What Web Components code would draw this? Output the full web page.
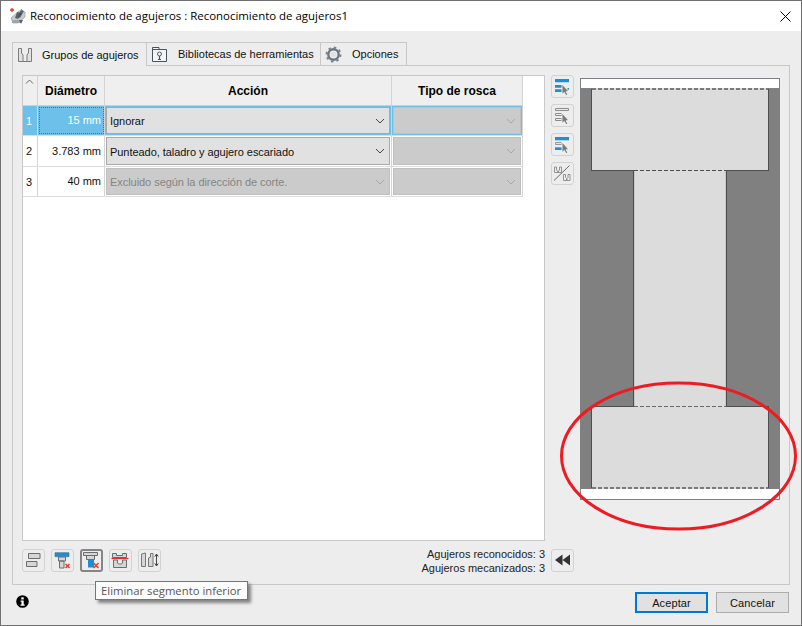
<!DOCTYPE html>
<html><head><meta charset="utf-8">
<style>
html,body{margin:0;padding:0;background:#ededed}
body{width:802px;height:626px;overflow:hidden;font-family:"Liberation Sans",Arial,sans-serif;font-size:11px;color:#111}
</style></head><body>
<hole-dialog>
  <hole-titlebar slot="title">Reconocimiento de agujeros : Reconocimiento de agujeros1</hole-titlebar>
  <hole-tabs slot="tabs">
    <hole-tab active icon="groups" style="width:135px">Grupos de agujeros</hole-tab>
    <hole-tab icon="lib" style="width:175px">Bibliotecas de herramientas</hole-tab>
    <hole-tab icon="gear" style="width:87px">Opciones</hole-tab>
  </hole-tabs>
  <hole-grid slot="grid">
    <hole-row head>
      <hole-cell kind="rowhead" head><svg width="9" height="5" viewBox="0 0 9 5"><path d="M1 4.500 4.500 1 8 4.500" fill="none" stroke="#666" stroke-width="1"/></svg></hole-cell>
      <hole-cell head>Diámetro</hole-cell>
      <hole-cell head>Acción</hole-cell>
      <hole-cell head>Tipo de rosca</hole-cell>
    </hole-row>
    <hole-row selected>
      <hole-cell kind="rowhead" selected>1</hole-cell>
      <hole-cell kind="num" selected focused>15 mm</hole-cell>
      <hole-cell kind="ctl" blue><hole-select>Ignorar</hole-select></hole-cell>
      <hole-cell kind="ctl" blue><hole-select disabled></hole-select></hole-cell>
    </hole-row>
    <hole-row tall>
      <hole-cell kind="rowhead">2</hole-cell>
      <hole-cell kind="num">3.783 mm</hole-cell>
      <hole-cell kind="ctl"><hole-select>Punteado, taladro y agujero escariado</hole-select></hole-cell>
      <hole-cell kind="ctl"><hole-select disabled></hole-select></hole-cell>
    </hole-row>
    <hole-row>
      <hole-cell kind="rowhead">3</hole-cell>
      <hole-cell kind="num">40 mm</hole-cell>
      <hole-cell kind="ctl"><hole-select disabled>Excluido según la dirección de corte.</hole-select></hole-cell>
      <hole-cell kind="ctl"><hole-select disabled></hole-select></hole-cell>
    </hole-row>
  </hole-grid>
  <hole-btn slot="side" icon="s1"></hole-btn>
  <hole-btn slot="side" icon="s2"></hole-btn>
  <hole-btn slot="side" icon="s3"></hole-btn>
  <hole-btn slot="side" icon="s4"></hole-btn>
  <hole-preview slot="preview"></hole-preview>
  <hole-btn slot="tools" icon="b1"></hole-btn>
  <hole-btn slot="tools" icon="b2"></hole-btn>
  <hole-btn slot="tools" icon="b3" active></hole-btn>
  <hole-btn slot="tools" icon="b4"></hole-btn>
  <hole-btn slot="tools" icon="b5"></hole-btn>
  <span slot="status">Agujeros reconocidos: 3</span>
  <span slot="status">Agujeros mecanizados: 3</span>
  <hole-btn slot="collapse" icon="rew"></hole-btn>
  <hole-push slot="ok" primary>Aceptar</hole-push>
  <hole-push slot="cancel">Cancelar</hole-push>
  <hole-tooltip slot="tip">Eliminar segmento inferior</hole-tooltip>
</hole-dialog>
<script>
const def=(name,css,html)=>{
  customElements.define(name,class extends HTMLElement{
    constructor(){super();const r=this.attachShadow({mode:'open'});r.innerHTML='<style>'+css+'</style>'+(typeof html==='function'?html(this):html);}
  });
};
const CUR='<path d="M11 9v10.500l2.300-2 1.700 3.200 1.800-1-1.600-3h2.800z" fill="#7a7a7a" stroke="#fff" stroke-width=".8"/>';
const ICONS={
 groups:'<svg width="16" height="16" viewBox="0 0 16 16" fill="none"><path d="M1.500 1.500h3v4.500L6 8v6.500H1.500zM14.500 1.500h-3v4.500L10 8v6.500h4.500z" fill="#e2e2e2" stroke="#7c7c7c"/><path d="M6 14.500h4" stroke="#7c7c7c"/></svg>',
 lib:'<svg width="17" height="16" viewBox="0 0 17 16" fill="none"><path d="M1.500 1.500h6.500v2h7.500v12h-14z" fill="#f3f6f8" stroke="#48535c"/><path d="M1.500 3.500h6.500" stroke="#48535c"/><circle cx="8.500" cy="8" r="2" stroke="#555"/><path d="M8.500 10v3.500M7 13.500h3" stroke="#555" stroke-width="1.200"/></svg>',
 gear:'<svg width="17" height="17" viewBox="0 0 17 17"><circle cx="8.500" cy="8.500" r="5.200" fill="none" stroke="#6b7680" stroke-width="2.400"/><circle cx="8.500" cy="8.500" r="7" fill="none" stroke="#7a858e" stroke-width="2" stroke-dasharray="2.500 3"/><circle cx="8.500" cy="8.500" r="2.800" fill="#e2e2e2"/></svg>',
 s1:'<svg width="23" height="23" viewBox="0 0 23 23"><path d="M4 4h14v3.300H4zM4 10h8v2.700H4zM4 14.300h8V17H4z" fill="#1d8fd6"/>'+CUR+'<path d="M16.500 13h1.500v1.800h-1.500z" fill="#1d8fd6"/></svg>',
 s2:'<svg width="23" height="23" viewBox="0 0 23 23" fill="none" stroke="#8c8c8c"><path d="M4.500 4.500h13v2h-13zM4.500 9.500h6.500v2H4.500zM4.500 14.500h6.500v2H4.500z"/>'+CUR+'</svg>',
 s3:'<svg width="23" height="23" viewBox="0 0 23 23"><path d="M4 4h14v3.300H4z" fill="#1d8fd6"/><path d="M4.500 9.500H11v2H4.500z" fill="#e6e6e6" stroke="#8c8c8c" stroke-width=".9"/><path d="M4 14.300h8V17H4z" fill="#1d8fd6"/>'+CUR+'</svg>',
 s4:'<svg width="23" height="23" viewBox="0 0 23 23" fill="none" stroke="#8a8a8a" stroke-width=".9"><path d="M3.500 5v5.500h7V5M3.500 5h2v3l1 1V10.500M10.500 5h-2v3l-1 1v1.500"/><path d="M12.500 12.500v6h6.500v-6M12.500 12.500h2v3l1 1v2M19 12.500h-2v3l-1 1v2"/><path d="M3 18.500 18.500 3.500" stroke="#6a6a6a" stroke-width="1"/></svg>',
 b1:'<svg width="23" height="23" viewBox="0 0 23 23"><path d="M6.500 4.500h11.500v5H6.500zM4.500 12.500h10.500v5H4.500z" fill="#d6d6d6" stroke="#6c6c6c"/></svg>',
 b2:'<svg width="23" height="23" viewBox="0 0 23 23"><path d="M4 3.700h14v4H4z" fill="#1d8fd6" stroke="#3a6f92" stroke-width=".6"/><path d="M7.500 8h7v4h-7zM8.500 12h4.500v7h-4.500z" fill="#d6d6d6" stroke="#6c6c6c"/><path d="M14.500 15l4 4M18.500 15l-4 4" stroke="#e8402a" stroke-width="1.600"/></svg>',
 b3:'<svg width="23" height="23" viewBox="0 0 23 23"><path d="M3.500 3.500h14v3h-14zM6.500 6.500h8v4h-8z" fill="#d6d6d6" stroke="#6c6c6c"/><path d="M8 10.500h6v8H8z" fill="#1d8fd6"/><path d="M13.500 14l5 5M18.500 14l-5 5" stroke="#e8402a" stroke-width="1.600"/></svg>',
 b4:'<svg width="23" height="23" viewBox="0 0 23 23"><path d="M3.500 4.500h4v2h6v-2h4v4h-14z" fill="#d6d6d6" stroke="#6c6c6c"/><path d="M4.500 11v7.500h13V11h-4v3l-1 1h-3l-1-1v-3z" fill="#d6d6d6" stroke="#6c6c6c"/><path d="M2.500 9.500h17" stroke="#e0312a" stroke-width="1.300"/></svg>',
 b5:'<svg width="23" height="23" viewBox="0 0 23 23"><path d="M3.500 5l4-1v13.500h-4zM10.500 9l2-1V4.500h2.500v13h-4.500z" fill="#d6d6d6" stroke="#6c6c6c" stroke-width=".9"/><path d="M18.500 5.500v11M16.800 7.500l1.700-2.500 1.700 2.500M16.800 14.500l1.700 2.500 1.700-2.500" fill="none" stroke="#444"/></svg>',
 rew:'<svg width="23" height="23" viewBox="0 0 23 23"><path d="M4 11l7.500-5.500v11zM11.500 11l7.500-5.500v11z" fill="#333"/></svg>'
};
def('hole-dialog',`
 :host{display:flex;flex-direction:column;width:802px;height:626px;box-sizing:border-box;border:1px solid #707070;background:#ededed;position:relative;overflow:hidden}
 .content{display:flex;flex-direction:column;padding:11px 12px 0 11px;flex:none}
 .panel{border:1px solid #c8c8c8;height:520px;box-sizing:border-box;width:778px;display:flex;flex-direction:column;padding:9px 0 0 9px;background:#ededed}
 .top{display:flex;height:466px}
 .gridwrap{width:523px;height:466px;box-sizing:border-box;border:1px solid #c8c8c8;background:#fff;flex:none}
 .side{display:flex;flex-direction:column;gap:6px;margin-left:6px;width:23px;flex:none}
 .prev{margin:3px 0 0 6px}
 .bottom{display:flex;height:23px;margin-top:8px}
 .left{display:flex;width:523px;flex:none}
 .tools{display:flex;gap:6px;flex:1}
 .status{display:flex;flex-direction:column;align-items:flex-end;justify-content:center;line-height:14px;font-size:11px;color:#222;height:23px}
 .coll{margin-left:6px}
 .footer{display:flex;align-items:center;padding:7px 12px 0 15px;height:21px}
 .info{width:13px;height:13px;flex:none;margin-top:-2px}
 .sp{flex:1}
 .gap{width:8px}
 .tip{position:absolute;left:94px;top:580px}
`,`
 <slot name="title"></slot>
 <div class="content">
  <slot name="tabs"></slot>
  <div class="panel">
   <div class="top">
    <div class="gridwrap"><slot name="grid"></slot></div>
    <div class="side"><slot name="side"></slot></div>
    <div class="prev"><slot name="preview"></slot></div>
   </div>
   <div class="bottom">
    <div class="left">
     <div class="tools"><slot name="tools"></slot></div>
     <div class="status"><slot name="status"></slot></div>
    </div>
    <div class="coll"><slot name="collapse"></slot></div>
   </div>
  </div>
 </div>
 <div class="footer">
  <svg class="info" viewBox="0 0 13 13"><circle cx="6.500" cy="6.500" r="6.300" fill="#000"/><rect x="5.300" y="2.300" width="2.400" height="2.200" fill="#fff"/><path d="M4.600 5.500h3.100v4h1v1.300H4.500V9.500h1V6.800h-.9z" fill="#fff"/></svg>
  <div class="sp"></div>
  <slot name="ok"></slot><div class="gap"></div><slot name="cancel"></slot>
 </div>
 <div class="tip"><slot name="tip"></slot></div>
`);
def('hole-titlebar',`
 :host{display:flex;align-items:center;height:30px;background:#fff;flex:none;font-family:"Open Sans","Noto Sans",sans-serif;font-size:11.450px;color:#000}
 .ic{margin:0 3px 0 8px;flex:none}
 .t{flex:1;position:relative;top:-1px}
 .x{margin-right:10px;flex:none}
`,`<svg class="ic" width="18" height="18" viewBox="0 0 18 18"><path d="M2 11l8-7 6 1v5l-7 6H4z" fill="#c8ccd0" stroke="#8c9298" stroke-width=".6"/><path d="M3 13h9v3H3z" fill="#9fa6ac"/><path d="M8 5l5 1-4 6-3-1z" fill="#5c6670"/><path d="M12 2l3 2-4 7-2-1z" fill="#3e464d" opacity=".7"/><path d="M1 3h4M3 1v4" stroke="#e2332a" stroke-width="1.300"/><path d="M10 13l2 4 2-4z" fill="#5a6168"/></svg>
 <span class="t"><slot></slot></span>
 <svg class="x" width="11" height="11" viewBox="0 0 11 11"><path d="M.5.500l10 10M10.500.500l-10 10" stroke="#000" stroke-width="1"/></svg>`);
def('hole-tabs',`:host{display:flex;height:23px;align-items:flex-start;position:relative;z-index:1;flex:none}`,`<slot></slot>`);
def('hole-tab',`
 :host{display:flex;align-items:center;box-sizing:border-box;height:23px;border:1px solid #c8c8c8;border-bottom:none;background:#ededed;padding-left:4px;font-size:11px;color:#111;margin-left:-1px;flex:none}
 :host(:first-child){margin-left:0}
 :host([active]){height:24px;padding-left:4px;padding-top:1px;position:relative;z-index:1}
 :host([active]) .i{margin-right:9px}
 .i{margin-right:10px;display:flex}
`,el=>`<div class="i">${ICONS[el.getAttribute('icon')]||''}</div><span><slot></slot></span>`);
def('hole-grid',`:host{display:block;width:500px}`,`<slot></slot>`);
def('hole-row',`
 :host{display:grid;grid-template-columns:15px 67px 287px 131px;height:30px;border-bottom:1px solid #dcdcdc;box-sizing:border-box}
 :host([tall]){height:31px}
 :host([head]){background:#efefef;border-bottom:1px solid #cfcfcf}
`,`<slot></slot>`);
def('hole-cell',`
 :host{display:flex;align-items:center;box-sizing:border-box;border-right:1px solid #d4d4d4;min-width:0;font-size:11px;color:#111}
 :host([head]){justify-content:center;font-weight:700;font-size:12px;color:#000;background:#efefef}
 :host([kind=rowhead]){padding-left:3px;justify-content:flex-start;font-size:11px;font-weight:400;background:#fff}
 :host([kind=rowhead][head]){align-items:flex-start;padding:3px 0 0 2px;background:#efefef}
 :host([kind=num]){justify-content:flex-end;padding-right:3px;padding-bottom:1px}
 :host([kind=rowhead][selected]),:host([kind=num][selected]){background:#6cc0ea;color:#fff}
 :host([focused]){outline:1px dotted #b0512a;outline-offset:-2px}
 :host([kind=ctl]){padding:1px 0 0 1px;align-items:stretch}
 :host([blue]){box-shadow:inset 0 0 0 1px #6cc0ea}
`,`<slot></slot>`);
def('hole-select',`
 :host{display:flex;align-items:center;flex:1;box-sizing:border-box;margin:0 1px 1px 0;border:1px solid #a9a9a9;background:#e1e1e1;font-size:11px;color:#111;padding-left:3px;min-width:0;letter-spacing:-.05px}
 :host([disabled]){background:#cbcbcb;border-color:#c0c0c0;color:#858585}
 span{flex:1;white-space:nowrap;overflow:hidden;padding-top:1px}
 svg{margin-right:4px;flex:none}
`,el=>`<span><slot></slot></span><svg width="10" height="6" viewBox="0 0 10 6"><path d="M1 1l4 4 4-4" fill="none" stroke="${el.hasAttribute('disabled')?'#a8a8a8':'#444'}" stroke-width="1"/></svg>`);
def('hole-btn',`
 :host{display:block;width:23px;height:23px;box-sizing:border-box;border:1px solid #d2d2d2;border-radius:3px;background:#ededed;flex:none;position:relative}
 :host([active]){border:2px solid #858585}
 svg{position:absolute;left:-1px;top:-1px;display:block}
 :host([active]) svg{left:-2px;top:-2px}
`,el=>ICONS[el.getAttribute('icon')]||'');
def('hole-preview',`:host{display:block;width:200px;height:423px;position:relative;overflow:visible}
 svg{position:absolute;left:0;top:0;overflow:visible}`,
`<svg width="200" height="460" viewBox="0 0 200 460" shape-rendering="crispEdges">
 <rect x="0" y="0" width="200" height="422" fill="#808080"/>
 <rect x=".5" y=".5" width="199" height="10" fill="#fff" stroke="#7d8186"/>
 <rect x="11" y="11" width="178" height="81" fill="#dcdcdc"/>
 <path d="M11.500 11v81.500h177V11" fill="none" stroke="#4e4e4e"/>
 <path d="M12 10.500h176" stroke="#dcdcdc" stroke-width="1"/><path d="M12 11h176" stroke="#7a7a7a" stroke-width="2" stroke-dasharray="4 2"/>
 <rect x="53" y="93" width="93" height="235" fill="#dcdcdc"/>
 <path d="M53.500 93v235M146.500 93v235" stroke="#4e4e4e"/>
 <path d="M54.500 93v235M145.500 93v235" stroke="#c8c8c8"/>
 <path d="M54 92.500h92" stroke="#dcdcdc"/><path d="M54 92.500h92" stroke="#4e4e4e" stroke-dasharray="4 2"/>
 <rect x="11" y="328" width="178" height="82" fill="#dcdcdc"/>
 <path d="M11.500 410V328.500h177V410" fill="none" stroke="#4e4e4e"/>
 <path d="M54 328.500h92" stroke="#dcdcdc"/><path d="M54 328.500h92" stroke="#6a6a6a" stroke-dasharray="4 2"/>
 <rect x=".5" y="410.500" width="199" height="11" fill="#fff" stroke="#808080"/>
 <path d="M12 410h176" stroke="#dcdcdc" stroke-width="2"/><path d="M12 410h176" stroke="#7a7a7a" stroke-width="2" stroke-dasharray="4 2"/>
 <ellipse cx="98.500" cy="378" rx="117" ry="73" fill="none" stroke="#ed1c24" stroke-width="3" shape-rendering="auto"/>
</svg>`);
def('hole-push',`
 :host{display:flex;align-items:center;justify-content:center;width:73px;height:21px;box-sizing:border-box;border:1px solid #adadad;background:#e1e1e1;font-size:11px;color:#111;letter-spacing:.1px;flex:none}
 :host([primary]){border:2px solid #0078d7}
`,`<slot></slot>`);
def('hole-tooltip',`
 :host{display:block;box-sizing:border-box;height:19px;width:153px;border:1px solid #767676;background:#fcfcfc;color:#575757;font-size:11.300px;line-height:17px;padding-left:5px;box-shadow:3px 3px 3px rgba(0,0,0,.45);white-space:nowrap;font-family:"Open Sans",sans-serif}
`,`<slot></slot>`);
</script>
</body></html>
